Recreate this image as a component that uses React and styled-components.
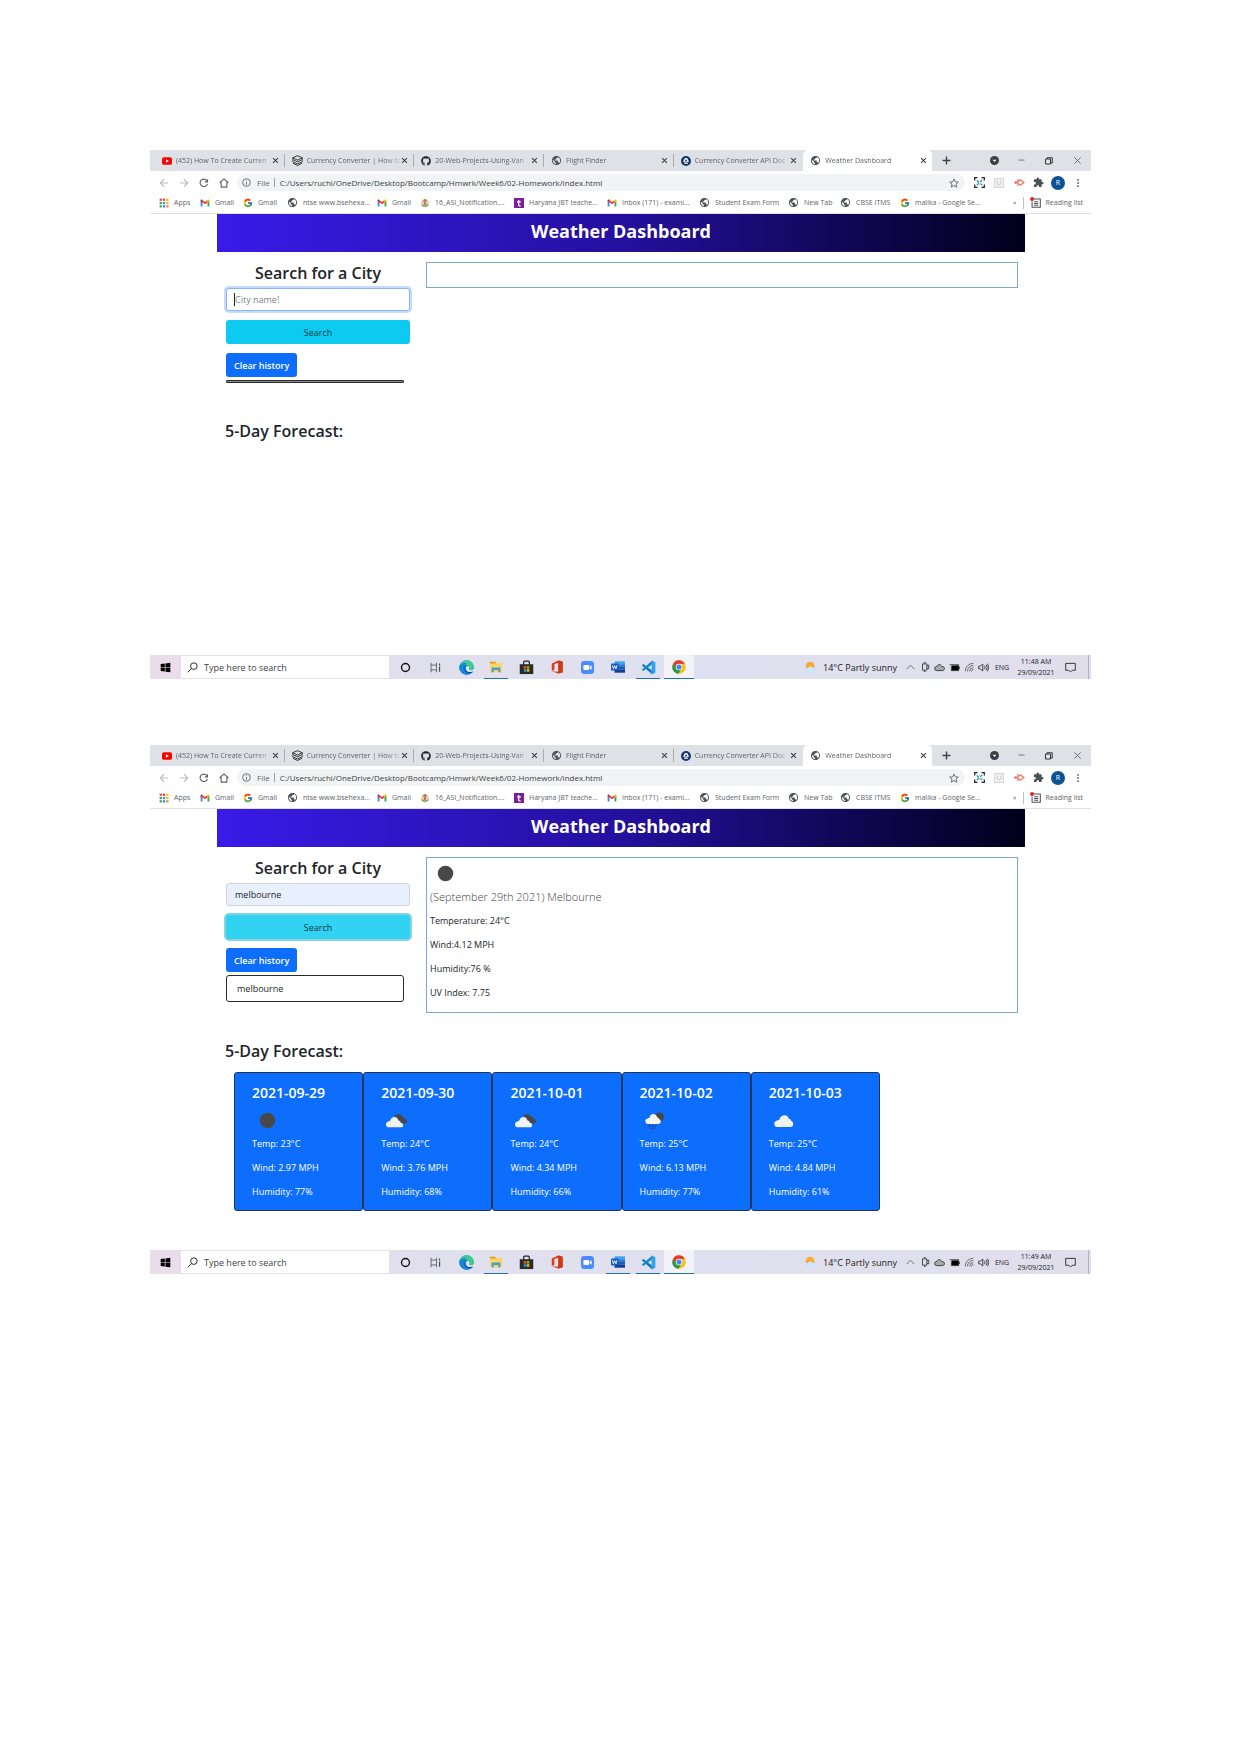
import React from "react";
import styled, { createGlobalStyle, css } from "styled-components";
import { FcGoogle } from "react-icons/fc";
import { FaGithub } from "react-icons/fa";
import { MdExtension, MdPublic } from "react-icons/md";

const sans = `"Open Sans", "Noto Sans", sans-serif`;

const GlobalStyle = createGlobalStyle`
  *, *::before, *::after { box-sizing: border-box; }
  body { margin: 0; background: #fff; font-family: ${sans}; color: #212529; }
  h1, h2, h3, p, ul { margin: 0; padding: 0; }
  button, input { font-family: inherit; margin: 0; }
  button { padding: 0; border: 0; background: none; color: inherit; cursor: pointer; }
  svg { display: block; flex: none; }
  a { color: inherit; text-decoration: none; }
`;

const Sheet = styled.main`
  display: flex;
  flex-direction: column;
  gap: 66px;
  padding: 150px;
`;

const Screen = styled.section`
  display: flex;
  flex-direction: column;
  min-height: 529px;
`;

/* ---------- browser chrome ---------- */

const TabStrip = styled.div`
  display: flex;
  align-items: center;
  height: 21px;
  padding-left: 5px;
  background: #dee1e6;
`;

const Tabs = styled.div`
  display: flex;
  flex: 0 1 778px;
  min-width: 0;
  height: 21px;
`;

const Tab = styled.div`
  display: flex;
  flex: 1 1 0;
  min-width: 0;
  align-items: center;
  padding: 0 4px 0 7px;
  color: #5f6368;
  border-radius: 5px 5px 0 0;
  background: ${(p) => (p.$active ? "#fff" : "transparent")};
  border-right: 1px solid ${(p) => (p.$line ? "#a9adb2" : "transparent")};
  background-clip: padding-box;
  ${(p) =>
    !p.$active &&
    css`
      height: 13px;
      margin-top: 4px;
      border-radius: 0;
    `}
`;

const TabTitle = styled.button`
  flex: 1;
  min-width: 0;
  margin-left: 4px;
  text-align: left;
  white-space: nowrap;
  font-size: 7px;
  line-height: 12px;
  mask-image: linear-gradient(90deg, #000 82%, rgba(0, 0, 0, 0.2) 100%);
`;

const IconButton = styled.button`
  display: flex;
  flex: none;
  align-items: center;
  justify-content: center;
  width: ${(p) => p.$w || 20}px;
  height: 17px;
  color: ${(p) => p.$color || "#5f6368"};
`;

const WindowButtons = styled.div`
  display: flex;
  margin-left: auto;
`;

const Toolbar = styled.div`
  display: flex;
  align-items: center;
  height: 23px;
  padding: 0 3px 0 4px;
`;

const Omnibox = styled.div`
  display: flex;
  flex: 1;
  align-items: center;
  height: 17px;
  margin: 0 4px 0 3px;
  padding: 0 6px 0 5px;
  border-radius: 9px;
  background: #f1f3f4;
  color: #5f6368;
  font-size: 8px;
`;

const Scheme = styled.span`
  margin-left: 6px;
  padding-right: 4px;
  border-right: 1px solid #9aa0a6;
  line-height: 9px;
`;

const AddressInput = styled.input`
  flex: 1;
  min-width: 0;
  padding: 0 0 0 5px;
  border: 0;
  outline: 0;
  background: none;
  color: #3c4043;
  font-size: 8px;
  line-height: 15px;
`;

const Avatar = styled.span`
  display: flex;
  align-items: center;
  justify-content: center;
  width: 14px;
  height: 14px;
  border-radius: 50%;
  background: #0b5394;
  color: #fff;
  font-size: 7px;
`;

const BookmarkBar = styled.nav`
  display: flex;
  align-items: center;
  height: 20px;
  padding: 0 8px 2px 9px;
  border-bottom: 1px solid #dfe1e5;
  color: #5f6368;
  font-size: 7px;
  line-height: 12px;
  white-space: nowrap;
`;

const Bookmark = styled.a`
  display: flex;
  align-items: center;
  gap: 5px;
  flex: 0 0 ${(p) => (p.$w ? p.$w + "px" : "auto")};
`;

const BookmarkEnd = styled.div`
  display: flex;
  align-items: center;
  gap: 6px;
  margin-left: auto;
`;

const ReadingList = styled.button`
  display: flex;
  align-items: center;
  gap: 5px;
  padding-left: 6px;
  border-left: 1px solid #bdc1c6;
  font-size: 7px;
  line-height: 12px;
`;

/* ---------- weather page ---------- */

const Page = styled.div`
  flex: 1;
  padding: 0 66px 0 67px;
`;

const Banner = styled.h1`
  padding: 4px 0 8px;
  background: linear-gradient(90deg, #3a1ae8, #24109f 50%, #00001a);
  color: #fff;
  text-align: center;
  font-size: 18px;
  line-height: 26px;
  font-weight: 700;
`;

const Columns = styled.div`
  display: grid;
  grid-template-columns: 1fr 3fr;
  align-items: start;
  padding-top: 10px;
`;

const SearchColumn = styled.form`
  display: flex;
  flex-direction: column;
  padding: 0 9px 10px;
`;

const SearchLabel = styled.label`
  margin-bottom: 4px;
  text-align: center;
  font-size: 16px;
  line-height: 22px;
  font-weight: 600;
`;

const Field = styled.div`
  position: relative;
  ${(p) =>
    p.$focused &&
    css`
      &::after {
        content: "";
        position: absolute;
        left: 8px;
        top: 5px;
        width: 1px;
        height: 13px;
        background: #212529;
      }
    `}
`;

const CityInput = styled.input`
  display: block;
  width: 100%;
  height: 23px;
  padding: 0 8px;
  border: 1px solid ${(p) => (p.$focused ? "#86b7fe" : "#ced4da")};
  border-radius: 3px;
  outline: 0;
  background: ${(p) => (p.$filled ? "#e8f0fe" : "#fff")};
  box-shadow: ${(p) => (p.$focused ? "0 0 0 2px #c2dbfe" : "none")};
  color: #212529;
  font-size: 9px;
  &::placeholder { color: #7b838a; opacity: 1; }
`;

const SearchButton = styled.button`
  height: 24px;
  margin-top: 9px;
  border-radius: 3px;
  background: ${(p) => (p.$focused ? "#31d2f2" : "#0dcaf0")};
  box-shadow: ${(p) => (p.$focused ? "0 0 0 2px #84d5e2" : "none")};
  color: #123c46;
  font-size: 9px;
`;

const ClearButton = styled.button`
  align-self: flex-start;
  height: 24px;
  margin-top: 9px;
  padding: 0 8px;
  border-radius: 3px;
  background: #0d6efd;
  color: #fff;
  font-size: 9px;
  font-weight: 600;
`;

const History = styled.ul`
  min-height: 3px;
  margin: 3px 6px 0 0;
  border: 1px solid #2b2b2b;
  border-radius: ${(p) => (p.$empty ? 1 : 3)}px;
  background: ${(p) => (p.$empty ? "#8c8c8c" : "#fff")};
  list-style: none;
`;

const HistoryItem = styled.li`
  padding: 0 10px;
  font-size: 9px;
  line-height: 25px;
`;

const Today = styled.section`
  min-height: 26px;
  margin: 0 7px;
  padding: 0 3px;
  border: 1px solid #7ba7d4;
`;

const TodayTitle = styled.h2`
  margin-bottom: 9px;
  color: #3d4247;
  font-size: 11px;
  line-height: 15px;
  font-weight: 300;
`;

const Reading = styled.p`
  margin-bottom: 9px;
  font-size: 9px;
  line-height: 15px;
`;

const TodayReadings = styled.div`
  padding-bottom: 3px;
`;

const ForecastTitle = styled.h2`
  margin: 27px 0 10px 8px;
  font-size: 16px;
  line-height: 22px;
  font-weight: 600;
`;

const Forecast = styled.div`
  display: grid;
  grid-template-columns: repeat(5, 1fr);
  max-width: 646px;
  margin-left: 17px;
`;

const DayCard = styled.article`
  padding: 12px 17px 2px;
  border: 1px solid #20365c;
  border-radius: 3px;
  background: #0d6efd;
  color: #fff;
`;

const DayTitle = styled.h3`
  margin-bottom: 4px;
  font-size: 14px;
  line-height: 16px;
  font-weight: 600;
`;

/* ---------- taskbar ---------- */

const Taskbar = styled.footer`
  display: flex;
  height: 24px;
  background: linear-gradient(90deg, #e3dfee, #dfe0ef 60%, #e1deec);
  color: #222;
`;

const StartButton = styled.button`
  display: flex;
  align-items: center;
  justify-content: center;
  width: 30px;
  background: #e9dde9;
`;

const TaskSearch = styled.label`
  display: flex;
  align-items: center;
  gap: 6px;
  width: 210px;
  padding-left: 6px;
  border: 1px solid #e2e2e8;
  background: #fff;
`;

const TaskInput = styled.input`
  width: 150px;
  padding: 0;
  border: 0;
  outline: 0;
  background: none;
  font-size: 9px;
  &::placeholder { color: #3f3f3f; opacity: 1; }
`;

const Apps = styled.div`
  display: flex;
  flex: 0 1 304px;
`;

const AppButton = styled.button`
  display: flex;
  flex: 1 1 0;
  align-items: center;
  justify-content: center;
  background-color: ${(p) => (p.$active ? "#f3f2f9" : "transparent")};
  ${(p) =>
    p.$open &&
    css`
      background-image: linear-gradient(#1f6fb5, #1f6fb5);
      background-repeat: no-repeat;
      background-position: bottom center;
      background-size: ${p.$active ? "100%" : "24px"} 1px;
    `}
`;

const Tray = styled.div`
  display: flex;
  align-items: center;
  margin-left: auto;
  padding-right: 2px;
  font-size: 9px;
  white-space: nowrap;
`;

const WeatherButton = styled.button`
  display: flex;
  align-items: center;
  gap: 6px;
  margin-right: 6px;
  font-size: 9px;
`;

const Language = styled.span`
  width: 22px;
  text-align: center;
  font-size: 7px;
`;

const Clock = styled.time`
  width: 46px;
  text-align: center;
  font-size: 7px;
  line-height: 11px;
`;

const Desktop = styled.span`
  height: 24px;
  margin-left: 7px;
  border-left: 1px solid #b4b2c2;
`;

/* ---------- icons ---------- */

const Svg = ({ s = 10, box = 16, children, ...rest }) => (
  <svg width={s} height={s} viewBox={`0 0 ${box} ${box}`} fill="none" aria-hidden="true" {...rest}>
    {children}
  </svg>
);

const Line = ({ d, w = 1.5, ...rest }) => (
  <Svg {...rest}>
    <path d={d} stroke="currentColor" strokeWidth={w} />
  </Svg>
);

const Cross = ({ s = 7, w = 2.4 }) => <Line s={s} w={w} d="M2.5 2.5l11 11M13.5 2.5l-11 11" />;
const Globe = () => <MdPublic size={11} color="#505357" />;

const YouTube = () => (
  <Svg>
    <rect y="2" width="16" height="12" rx="3" fill="#f00" />
    <path d="M6.3 5.2v5.6L11 8z" fill="#fff" />
  </Svg>
);

const Stack = () => (
  <Svg s={11}>
    <g stroke="#333" strokeWidth="1.4" strokeLinejoin="round">
      <path d="M8 1l7 3-7 3.400L1 4zM1 4v2.500L8 10l7-3.500V4M1 7.800v2L8 13l7-3.200v-2M1.500 12L8 15.300l6.500-3.300" />
    </g>
  </Svg>
);

const ApiLogo = () => (
  <Svg>
    <circle cx="8" cy="8" r="8" fill="#15386e" />
    <path d="M8 3.200a3.300 3.300 0 013.300 3.300L13 9H3l1.700-2.500A3.300 3.300 0 018 3.200zM5 10.500h6v1.800H5z" fill="#fff" />
    <circle cx="8" cy="7" r="1.400" fill="#15386e" />
  </Svg>
);

const Gmail = () => (
  <Svg>
    <path d="M1 13.500V4l3 2.200v7.300z" fill="#4285f4" />
    <path d="M15 13.500V4l-3 2.200v7.300z" fill="#34a853" />
    <path d="M4 3.200l4 3 4-3v3.900l-4 3-4-3z" fill="#ea4335" />
    <path d="M1 4.500c0-2 1.700-2.500 3-1.300v3.900L1 5.500z" fill="#c5221f" />
    <path d="M15 4.500c0-2-1.700-2.500-3-1.300v3.900l3-1.600z" fill="#fbbc04" />
  </Svg>
);

const AppsGrid = () => (
  <Svg>
    {["#ea4335", "#ea4335", "#fbbc04", "#34a853", "#4285f4", "#fbbc04", "#34a853", "#4285f4", "#ea8a35"].map((c, i) => (
      <rect key={i} x={1 + (i % 3) * 5.3} y={1 + Math.floor(i / 3) * 5.3} width="3.600" height="3.600" fill={c} />
    ))}
  </Svg>
);

const Emblem = () => (
  <Svg>
    <circle cx="8" cy="8.500" r="6.500" fill="#e2d3b4" />
    <circle cx="8" cy="4.500" r="2.800" fill="#c8744c" />
    <path d="M3 10.500c3 3.500 7 3.500 10 0" stroke="#6ca06c" strokeWidth="2" />
    <circle cx="8" cy="9" r="1.800" fill="#a8604c" />
  </Svg>
);

const PurpleT = () => (
  <Svg>
    <rect width="16" height="16" fill="#7b1fa2" />
    <path d="M7.500 3v8c0 1.500 1 2 3 1.600M5 6h6" stroke="#fff" strokeWidth="2" />
  </Svg>
);

const Reader = () => (
  <Svg s={11}>
    <path d="M4 3h11v12H3V7M6 7h6M6 9.500h6M6 12h6" stroke="#4d5156" strokeWidth="1.500" />
    <circle cx="3" cy="3" r="3" fill="#d93025" />
  </Svg>
);

const Moon = () => (
  <Svg s={31} box={50}>
    <circle cx="25" cy="25" r="12.500" fill="#48484a" />
  </Svg>
);

const CloudIcon = () => (
  <Svg s={31} box={50}>
    <path d="M14 35.500c-3 0-5.500-2-5.500-5s2.200-5.200 5-5.500c1-1.200 2.300-1.300 3.200-1.200C17.700 19.100 21 16.500 25 16.500c4.300 0 6.500 3 7 5.500 2.500 0 3.800 1.800 3.800 4 2 .4 3.200 2.200 3.200 4.500 0 3-2 5-4.600 5z" fill="#f2f2f2" />
  </Svg>
);

const BrokenClouds = () => (
  <Svg s={31} box={50}>
    <g transform="translate(4.200 5) scale(.84)">
      <path d="M21 16c3-6 12-6 14 0 3 0 5 1.500 5 4 3 .5 5 2.500 5 5s-2 4.500-5 4.500h-4z" fill="#48484a" />
      <path d="M10.500 37c-3.500 0-6-2-6-5.500s2-5.500 5-5.800c1-1.200 2.300-1.300 3.200-1.200C13.700 20 17 17 20.500 17c4.300 0 7.300 3 8 7 2.500.3 4 1.800 4.300 4 2.700.4 4.700 2.200 4.700 4.700 0 2.600-2 4.300-4.600 4.300z" fill="#f2f2f2" />
    </g>
  </Svg>
);

const NightRain = () => (
  <Svg s={31} box={50}>
    <circle cx="31" cy="19.500" r="7.500" fill="#48484a" />
    <path d="M13 30.500c-2.500 0-4.500-1.800-4.500-4.300 0-2.400 1.800-4.200 4.200-4.400.8-1 1.800-1.200 2.500-1C16 16.500 18.500 14.500 21 14.500c3.800 0 6.200 2.500 6.800 5.800 1.800.2 2.800 1.200 3 2.800 1.700.3 2.700 1.500 2.700 3.500 0 2.300-1.700 3.900-4 3.900z" fill="#f2f2f2" />
    <path d="M16 32.500l-1.500 2.500M21 32.500l-1.500 2.500M26 32.500l-1.500 2.500M18.500 36.500l-1 2M23.500 36.500l-1 2" stroke="#2a3a66" strokeWidth="2.200" />
  </Svg>
);

const Windows = () => (
  <Svg s={11}>
    <path d="M1 3l6-.8v5.300H1zM8 2l7-1v6.500H8zM1 8.500h6v5.300L1 13zM8 8.500h7V15l-7-1z" fill="#000" />
  </Svg>
);

const Magnifier = () => (
  <Svg s={11}>
    <circle cx="10" cy="6" r="4.800" stroke="#222" strokeWidth="1.400" />
    <path d="M6.500 9.500L1 15" stroke="#222" strokeWidth="1.400" />
  </Svg>
);

const Cortana = () => (
  <Svg s={11}>
    <circle cx="8" cy="8" r="5.800" stroke="#111" strokeWidth="2" />
  </Svg>
);

const TaskView = () => (
  <Svg s={11}>
    <path d="M1.500 1v3.500h8V1M1.500 15v-3.500h8V15M1.500 4.500v7M9.500 4.500v7" stroke="#555" strokeWidth="1.200" />
    <path d="M14 2v3M14 6.500V14" stroke="#333" strokeWidth="1.500" />
  </Svg>
);

const Edge = () => (
  <Svg s={15}>
    <circle cx="8" cy="8" r="7.700" fill="#1478cf" />
    <path d="M.5 7C1 3 4.300.3 8 .3c4.300 0 7.700 2.900 7.700 6.500 0 2.400-1.900 3.900-4 3.900-1.700 0-2.500-.6-2.200-1.200.8-1 .6-3.600-2-4.300C4.500 4.400 1.800 5.300.5 7z" fill="#3ccb8c" />
    <path d="M.5 7C1.800 3 6 2 9 4.500c-2-.5-4 .5-4.300 3-.3 3.500 2.300 6.500 6.300 6.200 1.500-.1 2.800-.8 3.600-1.500-1.800 3-5.600 4.200-9 3C2 14 0 10.500.5 7z" fill="#1688d8" />
    <path d="M6.300 8.500c-.2 2.500 2 4.300 5 4.300 1.300 0 2.600-.3 3.500-1 .3.300.2.800-.2 1.200-1 .8-2.300 1-3.600 1-3.500 0-5.500-2.800-4.700-5.500z" fill="#0c4a9c" />
    <path d="M9.300 6.400c1.500 0 2.200 1.300 1.400 2.700-.5 1 .3 1.800 1.800 1.800 1.500 0 2.700-.6 3.500-1.500l-.8 2.600c-2.500 1.300-5.200.9-6.700-.4-1.700-1.500-1.500-5.200.8-5.200z" fill="#e1e7f4" />
  </Svg>
);

const Explorer = () => (
  <Svg s={14}>
    <path d="M1 2h6l1 1.500h7V14H1z" fill="#fbd568" />
    <path d="M1 2h6l1 2H1z" fill="#dd9d1f" />
    <path d="M3 14V8.500h10V14h-2.500v-2.500h-5V14z" fill="#4a9bd4" />
  </Svg>
);

const Store = () => (
  <Svg s={15}>
    <path d="M5 5V2.200c0-.6.400-1 1-1h4c.6 0 1 .4 1 1V5" stroke="#222" strokeWidth="1.300" />
    <path d="M.8 4.500h14.400V15H.8z" fill="#2b2b2b" />
    <path d="M5 6.500h2.700v2.700H5z" fill="#f25022" />
    <path d="M8.300 6.500H11v2.700H8.300z" fill="#7fba00" />
    <path d="M5 9.800h2.700v2.700H5z" fill="#00a4ef" />
    <path d="M8.300 9.800H11v2.700H8.300z" fill="#ffb900" />
  </Svg>
);

const Office = () => (
  <Svg s={14}>
    <path d="M2 4l7.500-3.500L14.500 2v12l-5 1.500L2 12.800 9.500 13.500V3.200L5 4.500v6.700L2 12.500z" fill="#dc3e15" />
    <path d="M9.500.5l5 1.500v12l-5 1.500z" fill="#d03a12" />
  </Svg>
);

const Zoom = () => (
  <Svg s={13}>
    <rect width="16" height="16" rx="4" fill="#4a8cff" />
    <rect x="3" y="5" width="7" height="6" rx="1.200" fill="#fff" />
    <path d="M10.500 7.200L13 5.300v5.400l-2.500-1.900z" fill="#fff" />
  </Svg>
);

const Word = () => (
  <Svg s={14}>
    <path d="M4 1.500h12v3.300H4z" fill="#41a5ee" />
    <path d="M4 4.800h12V8H4z" fill="#2b7cd3" />
    <path d="M4 8h12v3.200H4z" fill="#185abd" />
    <path d="M4 11.200h12v3.300H4z" fill="#103f91" />
    <rect y="4" width="8.500" height="8" rx=".8" fill="#185abd" />
    <path d="M1.700 6l1 4 1.500-3.500L5.700 10l1-4" stroke="#fff" strokeWidth="1" />
  </Svg>
);

const VSCode = () => (
  <Svg s={15}>
    <path d="M.8 5.500L2.500 4.200 12 11.500V15.500z" fill="#0a78bf" />
    <path d="M.8 10.500l1.700 1.300L12 4.500V.5z" fill="#1389cf" />
    <path d="M11.300.5L15.300 2.300v11.400l-4 1.800z" fill="#2ea4ee" />
  </Svg>
);

const Chrome = () => (
  <Svg s={14}>
    <circle cx="8" cy="8" r="7.700" fill="#fbc116" />
    <path d="M1.300 4.200A7.700 7.700 0 0114.700 4.300L8 4.500 4.700 9.800z" fill="#e33b2e" />
    <path d="M1.300 4.200a7.700 7.700 0 006.200 11.500l3.300-5.600H5z" fill="#2a9a48" />
    <circle cx="8" cy="8" r="3.700" fill="#fff" />
    <circle cx="8" cy="8" r="2.900" fill="#4285f4" />
  </Svg>
);

const PartlySunny = () => (
  <Svg s={13}>
    <circle cx="7.500" cy="6.500" r="5.500" fill="#f9a93a" />
    <g fill="#cfe4f7">
      <circle cx="3.800" cy="11.800" r="3.300" />
      <circle cx="8" cy="10.300" r="3.600" />
      <circle cx="12.500" cy="11.800" r="3.300" />
      <rect x="3.800" y="11" width="8.700" height="4.100" />
    </g>
  </Svg>
);

const Scan = () => (
  <Svg s={11}>
    <path d="M1 5V1h4M11 1h4v4M15 11v4h-4M5 15H1v-4" stroke="#202124" strokeWidth="1.800" />
    <path d="M4 5l3 3M12 4L9 7M4 12l3-3M12 12l-2-2" stroke="#2b6ca3" strokeWidth="1.500" />
    <circle cx="8" cy="8" r="2.500" stroke="#45b9ad" strokeWidth="1.200" />
  </Svg>
);

const Shield = () => (
  <Svg>
    <rect x=".7" y=".7" width="14.600" height="14.600" stroke="#d0d3d6" strokeWidth="1.400" fill="#f1f1f1" />
    <path d="M5 4v5l3 3 3-3V4" stroke="#c2c5c8" strokeWidth="1.500" />
  </Svg>
);

const Diamond = () => (
  <Svg s={11}>
    <path d="M4.500 8L9 4l5.500 4L9 12zM4.500 3.500L7 6M4.500 12.500L7 10" stroke="#f06a62" strokeWidth="1.600" />
    <circle cx="2.500" cy="8" r="2" fill="#f06a62" />
  </Svg>
);

const Info = () => (
  <Svg s={9}>
    <circle cx="8" cy="8" r="6.800" stroke="currentColor" strokeWidth="1.600" />
    <path d="M8 7v5M8 4v1.600" stroke="currentColor" strokeWidth="1.600" />
  </Svg>
);

const Reload = () => (
  <Svg s={10}>
    <path d="M13.500 9.500A6 6 0 1112.500 4" stroke="currentColor" strokeWidth="1.900" />
    <path d="M14.500 1v6h-6z" fill="currentColor" />
  </Svg>
);

const Dots = () => (
  <Svg>
    <circle cx="8" cy="3" r="1.500" fill="currentColor" />
    <circle cx="8" cy="8" r="1.500" fill="currentColor" />
    <circle cx="8" cy="13" r="1.500" fill="currentColor" />
  </Svg>
);

const Disc = () => (
  <Svg s={9}>
    <circle cx="8" cy="8" r="8" fill="#3c4043" />
    <path d="M4.500 6.500h7L8 10.800z" fill="#fff" />
  </Svg>
);

const OneDrive = () => (
  <Svg s={11}>
    <path d="M4 12.500a3 3 0 010-6C5 3 10 3 11.500 6.500c2.500 0 3.700 1.500 3.700 3s-1.200 3-3.200 3z" fill="#a9a9a9" stroke="#333" strokeWidth="1.300" />
  </Svg>
);

const Battery = () => (
  <Svg s={11}>
    <path d="M4 5h10v7H4z" fill="#000" />
    <path d="M1 4h13v8.500H3.500V6M15.300 7v3" stroke="#222" strokeWidth="1.200" />
  </Svg>
);

const Wifi = () => (
  <Svg s={10}>
    <path d="M2 15A13 13 0 0115 2M5.500 15A9.500 9.500 0 0115 5.500M9 15a6 6 0 016-6M12 15a3 3 0 013-3" stroke="#555" strokeWidth="1.300" />
  </Svg>
);

/* ---------- data ---------- */

const tabs = [
  { icon: <YouTube />, title: "(452) How To Create Curren" },
  { icon: <Stack />, title: "Currency Converter | How to" },
  { icon: <FaGithub size={10} color="#24292e" />, title: "20-Web-Projects-Using-Van" },
  { icon: <Globe />, title: "Flight Finder" },
  { icon: <ApiLogo />, title: "Currency Converter API Doc" },
  { icon: <Globe />, title: "Weather Dashboard", active: true },
];

const bookmarks = [
  { icon: <AppsGrid />, title: "Apps", w: 41 },
  { icon: <Gmail />, title: "Gmail", w: 43 },
  { icon: <FcGoogle size={10} />, title: "Gmail", w: 44 },
  { icon: <Globe />, title: "ntse www.bsehexa...", w: 90 },
  { icon: <Gmail />, title: "Gmail", w: 43 },
  { icon: <Emblem />, title: "16_ASI_Notification....", w: 94 },
  { icon: <PurpleT />, title: "Haryana JBT teache...", w: 93 },
  { icon: <Gmail />, title: "Inbox (171) - exami...", w: 92 },
  { icon: <Globe />, title: "Student Exam Form", w: 89 },
  { icon: <Globe />, title: "New Tab", w: 52 },
  { icon: <Globe />, title: "CBSE ITMS", w: 60 },
  { icon: <FcGoogle size={10} />, title: "malika - Google Se..." },
];

const apps = [
  ["Cortana", Cortana],
  ["Task view", TaskView],
  ["Edge", Edge],
  ["Explorer", Explorer],
  ["Store", Store],
  ["Office", Office],
  ["Zoom", Zoom],
  ["Word", Word],
  ["VS Code", VSCode],
  ["Chrome", Chrome],
];

const forecast = [
  { date: "2021-09-29", Icon: Moon, temp: 23, wind: "2.97", humidity: 77 },
  { date: "2021-09-30", Icon: BrokenClouds, temp: 24, wind: "3.76", humidity: 68 },
  { date: "2021-10-01", Icon: BrokenClouds, temp: 24, wind: "4.34", humidity: 66 },
  { date: "2021-10-02", Icon: NightRain, temp: 25, wind: "6.13", humidity: 77 },
  { date: "2021-10-03", Icon: CloudIcon, temp: 25, wind: "4.84", humidity: 61 },
];

const today = ["Temperature: 24°C", "Wind:4.12 MPH", "Humidity:76 %", "UV Index: 7.75"];

/* ---------- sections ---------- */

function BrowserChrome() {
  return (
    <header>
      <TabStrip>
        <Tabs>
          {tabs.map((t, i) => (
            <Tab key={t.title} $active={t.active} $line={i < 4}>
              {t.icon}
              <TabTitle>{t.title}</TabTitle>
              <IconButton $w={9} $color="#3c4043" aria-label="Close tab"><Cross /></IconButton>
            </Tab>
          ))}
        </Tabs>
        <IconButton $w={26} $color="#3c4043" aria-label="New tab"><Line s={9} w={2.4} d="M8 1v14M1 8h14" /></IconButton>
        <WindowButtons>
          <IconButton $w={27} aria-label="Tab search"><Disc /></IconButton>
          <IconButton $w={27} aria-label="Minimise"><Line s={7} w={1.8} d="M1 7h14" /></IconButton>
          <IconButton $w={28} $color="#202124" aria-label="Restore"><Line s={8} w={1.8} d="M1 4h10v10H1zM4 4V1.500h10.500V12H11" /></IconButton>
          <IconButton $w={28} aria-label="Close window"><Cross s={9} w={1.6} /></IconButton>
        </WindowButtons>
      </TabStrip>
      <Toolbar>
        <IconButton $color="#bcbec1" aria-label="Back"><Line w={1.8} d="M15 8H2M8 2L2 8l6 6" /></IconButton>
        <IconButton $color="#bcbec1" aria-label="Forward"><Line w={1.8} d="M1 8h13M8 2l6 6-6 6" /></IconButton>
        <IconButton aria-label="Reload"><Reload /></IconButton>
        <IconButton aria-label="Home"><Line s={10} w={1.8} d="M1 8l7-6.500L15 8M3.500 7v7.500h9V7" /></IconButton>
        <Omnibox>
          <Info />
          <Scheme>File</Scheme>
          <AddressInput
            aria-label="Address"
            readOnly
            value="C:/Users/ruchi/OneDrive/Desktop/Bootcamp/Hmwrk/Week6/02-Homework/index.html"
          />
          <Line s={10} w={1.4} d="M8 1.500l2 4.600 5 .4-3.800 3.200 1.200 4.900L8 12l-4.400 2.600 1.200-4.900L1 6.500l5-.4z" />
        </Omnibox>
        <IconButton aria-label="Capture"><Scan /></IconButton>
        <IconButton aria-label="Shield"><Shield /></IconButton>
        <IconButton aria-label="Recorder"><Diamond /></IconButton>
        <IconButton $w={19} aria-label="Extensions"><MdExtension size={11} color="#4d5156" /></IconButton>
        <IconButton aria-label="Profile"><Avatar>R</Avatar></IconButton>
        <IconButton aria-label="Menu"><Dots /></IconButton>
      </Toolbar>
      <BookmarkBar>
        {bookmarks.map((b, i) => (
          <Bookmark key={i} href="#" $w={b.w}>
            {b.icon}
            {b.title}
          </Bookmark>
        ))}
        <BookmarkEnd>
          <span>»</span>
          <ReadingList>
            <Reader />
            Reading list
          </ReadingList>
        </BookmarkEnd>
      </BookmarkBar>
    </header>
  );
}

function Dashboard({ id, city }) {
  return (
    <Page>
      <Banner>Weather Dashboard</Banner>
      <Columns>
        <SearchColumn onSubmit={(e) => e.preventDefault()}>
          <SearchLabel htmlFor={id}>Search for a City</SearchLabel>
          <Field $focused={!city}>
            <CityInput id={id} placeholder="City name!" defaultValue={city} $focused={!city} $filled={!!city} />
          </Field>
          <SearchButton type="submit" $focused={!!city}>Search</SearchButton>
          <ClearButton type="button">Clear history</ClearButton>
          <History $empty={!city}>{city && <HistoryItem>{city}</HistoryItem>}</History>
        </SearchColumn>
        <Today>
          {city && (
            <>
              <Moon />
              <TodayTitle>(September 29th 2021) Melbourne</TodayTitle>
              <TodayReadings>
                {today.map((line) => (
                  <Reading key={line}>{line}</Reading>
                ))}
              </TodayReadings>
            </>
          )}
        </Today>
      </Columns>
      <ForecastTitle>5-Day Forecast:</ForecastTitle>
      {city && (
        <Forecast>
          {forecast.map(({ date, Icon, temp, wind, humidity }) => (
            <DayCard key={date}>
              <DayTitle>{date}</DayTitle>
              <Icon />
              <Reading>Temp: {temp}°C</Reading>
              <Reading>Wind: {wind} MPH</Reading>
              <Reading>Humidity: {humidity}%</Reading>
            </DayCard>
          ))}
        </Forecast>
      )}
    </Page>
  );
}

function WindowsTaskbar({ time, open }) {
  return (
    <Taskbar>
      <StartButton aria-label="Start"><Windows /></StartButton>
      <TaskSearch>
        <Magnifier />
        <TaskInput placeholder="Type here to search" aria-label="Type here to search" />
      </TaskSearch>
      <Apps>
        {apps.map(([name, Icon]) => (
          <AppButton key={name} aria-label={name} $open={open.includes(name)} $active={name === "Chrome"}>
            <Icon />
          </AppButton>
        ))}
      </Apps>
      <Tray>
        <WeatherButton>
          <PartlySunny />
          <span>14°C Partly sunny</span>
        </WeatherButton>
        <IconButton $w={15} aria-label="Hidden icons"><Line s={9} w={1.6} d="M1 11l7-7 7 7" /></IconButton>
        <IconButton $w={14} $color="#333" aria-label="Meet now"><Line s={10} w={1.4} d="M4 3h7v10H4zM6 1h3M6 15h3M11 6l3-1v6l-3-1" /></IconButton>
        <IconButton $w={15} aria-label="OneDrive"><OneDrive /></IconButton>
        <IconButton $w={15} aria-label="Battery"><Battery /></IconButton>
        <IconButton $w={14} aria-label="Network"><Wifi /></IconButton>
        <IconButton $w={15} $color="#333" aria-label="Volume"><Line s={11} w={1.3} d="M1 6h2.500L7 3v10L3.500 10H1zM9.500 5.500q1.500 2.500 0 5M12 4q2.500 4 0 8M14 2.500q3 5.500 0 11" /></IconButton>
        <Language>ENG</Language>
        <Clock>
          {time}
          <br />
          29/09/2021
        </Clock>
        <IconButton $w={22} $color="#333" aria-label="Notifications"><Line s={11} w={1.4} d="M1 2h14v10h-4.500L8 14.500 5.500 12H1z" /></IconButton>
        <Desktop />
      </Tray>
    </Taskbar>
  );
}

export default function App() {
  return (
    <>
      <GlobalStyle />
      <Sheet>
        <Screen>
          <BrowserChrome />
          <Dashboard id="city-empty" city="" />
          <WindowsTaskbar time="11:48 AM" open={["Explorer", "VS Code", "Chrome"]} />
        </Screen>
        <Screen>
          <BrowserChrome />
          <Dashboard id="city-melbourne" city="melbourne" />
          <WindowsTaskbar time="11:49 AM" open={["Explorer", "Word", "VS Code", "Chrome"]} />
        </Screen>
      </Sheet>
    </>
  );
}
